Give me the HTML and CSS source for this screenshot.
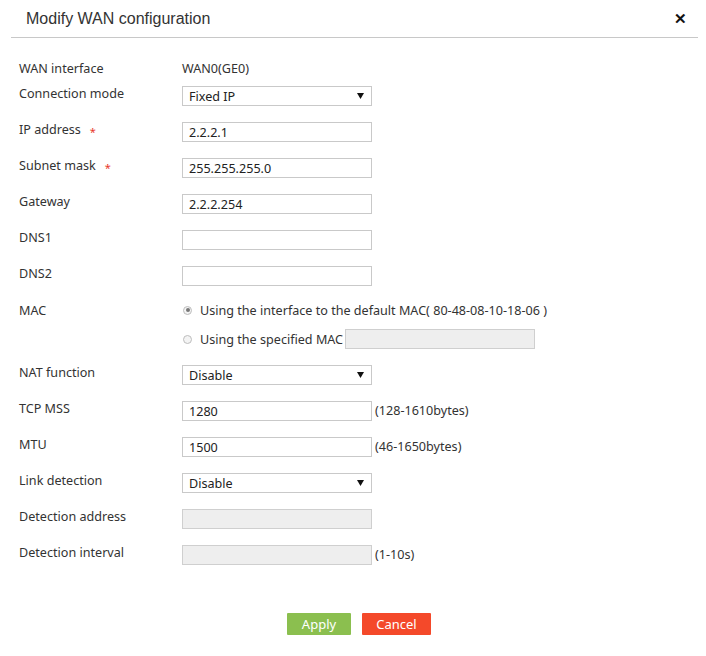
FILE: index.html
```html
<!DOCTYPE html>
<html lang="en">
<head>
    <meta charset="UTF-8">
    <title>Modify WAN configuration</title>
    <link rel="stylesheet" href="styles.css">
</head>
<body>
    <div class="dialog">
        <div class="dialog-header">
            <h2 class="dialog-title">Modify WAN configuration</h2>
            <span class="close">&#x2715;</span>
        </div>
        <div class="form">
            <div class="row row-static">
                <div class="label">WAN interface</div>
                <div class="value">WAN0(GE0)</div>
            </div>
            <div class="row">
                <div class="label">Connection mode</div>
                <div class="select"><span>Fixed IP</span><svg class="arrow" width="7" height="6" viewBox="0 0 7 6"><path d="M0 0h7L3.5 6z"/></svg></div>
            </div>
            <div class="row">
                <div class="label">IP address<span class="req">*</span></div>
                <div class="input">2.2.2.1</div>
            </div>
            <div class="row">
                <div class="label">Subnet mask<span class="req">*</span></div>
                <div class="input">255.255.255.0</div>
            </div>
            <div class="row">
                <div class="label">Gateway</div>
                <div class="input">2.2.2.254</div>
            </div>
            <div class="row">
                <div class="label">DNS1</div>
                <div class="input"></div>
            </div>
            <div class="row">
                <div class="label">DNS2</div>
                <div class="input"></div>
            </div>
            <div class="row row-mac">
                <div class="label">MAC</div>
                <div class="radios">
                    <div class="radio-line">
                        <span class="radio checked"></span>
                        <span>Using the interface to the default MAC( 80-48-08-10-18-06 )</span>
                    </div>
                    <div class="radio-line">
                        <span class="radio"></span>
                        <span>Using the specified MAC</span>
                        <div class="input input-disabled input-mac"></div>
                    </div>
                </div>
            </div>
            <div class="row">
                <div class="label">NAT function</div>
                <div class="select"><span>Disable</span><svg class="arrow" width="7" height="6" viewBox="0 0 7 6"><path d="M0 0h7L3.5 6z"/></svg></div>
            </div>
            <div class="row">
                <div class="label">TCP MSS</div>
                <div class="input">1280</div>
                <span class="hint">(128-1610bytes)</span>
            </div>
            <div class="row">
                <div class="label">MTU</div>
                <div class="input">1500</div>
                <span class="hint">(46-1650bytes)</span>
            </div>
            <div class="row">
                <div class="label">Link detection</div>
                <div class="select"><span>Disable</span><svg class="arrow" width="7" height="6" viewBox="0 0 7 6"><path d="M0 0h7L3.5 6z"/></svg></div>
            </div>
            <div class="row">
                <div class="label">Detection address</div>
                <div class="input input-disabled"></div>
            </div>
            <div class="row">
                <div class="label">Detection interval</div>
                <div class="input input-disabled"></div>
                <span class="hint">(1-10s)</span>
            </div>
        </div>
        <div class="buttons">
            <button class="btn btn-apply">Apply</button>
            <button class="btn btn-cancel">Cancel</button>
        </div>
    </div>
</body>
</html>
```

FILE: styles.css
```css
body {
    margin: 0;
    background: #fff;
    font-family: "Noto Sans", "Open Sans", Arial, sans-serif;
    color: #333;
}
.dialog {
    width: 706px;
    height: 656px;
    background: #fff;
}
.dialog-header {
    display: flex;
    justify-content: space-between;
    align-items: center;
    height: 37px;
    margin: 0 8px 0 11px;
    border-bottom: 1px solid #c8c8c8;
}
.dialog-title {
    margin: 0 0 0 15px;
    font-family: "Liberation Sans", Arial, sans-serif;
    font-weight: normal;
    font-size: 16px;
    color: #333;
}
.close {
    font-size: 15px;
    font-weight: bold;
    color: #111;
    margin-right: 11px;
    margin-top: -1px;
}
.form {
    padding: 23px 0 0 19px;
    font-size: 12.6px;
}
.row {
    display: flex;
    align-items: flex-start;
    height: 36px;
}
.row-static {
    height: 25px;
}
.row-mac {
    height: 63px;
}
.label {
    width: 163px;
    flex-shrink: 0;
    line-height: 15px;
    color: #333;
}
.row-mac .label {
    margin-top: 1px;
}
.req {
    color: #e8382c;
    font-size: 11px;
    margin-left: 9px;
    vertical-align: -2px;
}
.value {
    line-height: 15px;
}
.input,
.select {
    box-sizing: border-box;
    width: 190px;
    height: 20px;
    border: 1px solid #c9c9c9;
    padding: 0 6px;
    line-height: 19px;
    color: #222;
    background: #fff;
}
.select {
    display: flex;
    justify-content: space-between;
    align-items: center;
}
.arrow {
    fill: #111;
    margin-right: 1px;
}
.input-disabled {
    background: #eeeeee;
    border-color: #cfcfcf;
}
.hint {
    margin-left: 3px;
    line-height: 20px;
}
.radios {
    display: flex;
    flex-direction: column;
    gap: 9px;
}
.radio-line {
    display: flex;
    align-items: center;
    height: 20px;
}
.radio-line:first-child {
    margin-top: -2px;
}
.radio {
    box-sizing: border-box;
    width: 9px;
    height: 9px;
    border: 1px solid #bdbdbd;
    border-radius: 50%;
    background: #f4f4f4;
    margin: 0 8px 0 1px;
    position: relative;
}
.radio.checked::after {
    content: "";
    position: absolute;
    left: 1.5px;
    top: 1.5px;
    width: 4px;
    height: 4px;
    border-radius: 50%;
    background: #777;
}
.input-mac {
    margin-left: 2px;
}
.buttons {
    display: flex;
    justify-content: center;
    gap: 11px;
    margin-top: 32px;
    padding-left: 12px;
}
.btn {
    height: 22px;
    border: none;
    border-radius: 1px;
    color: #fff;
    font-family: "Noto Sans", Arial, sans-serif;
    font-size: 13px;
    padding: 0;
    cursor: pointer;
}
.btn-apply {
    width: 64px;
    background: #8bbf4f;
}
.btn-cancel {
    width: 69px;
    background: #f4492a;
}
```
